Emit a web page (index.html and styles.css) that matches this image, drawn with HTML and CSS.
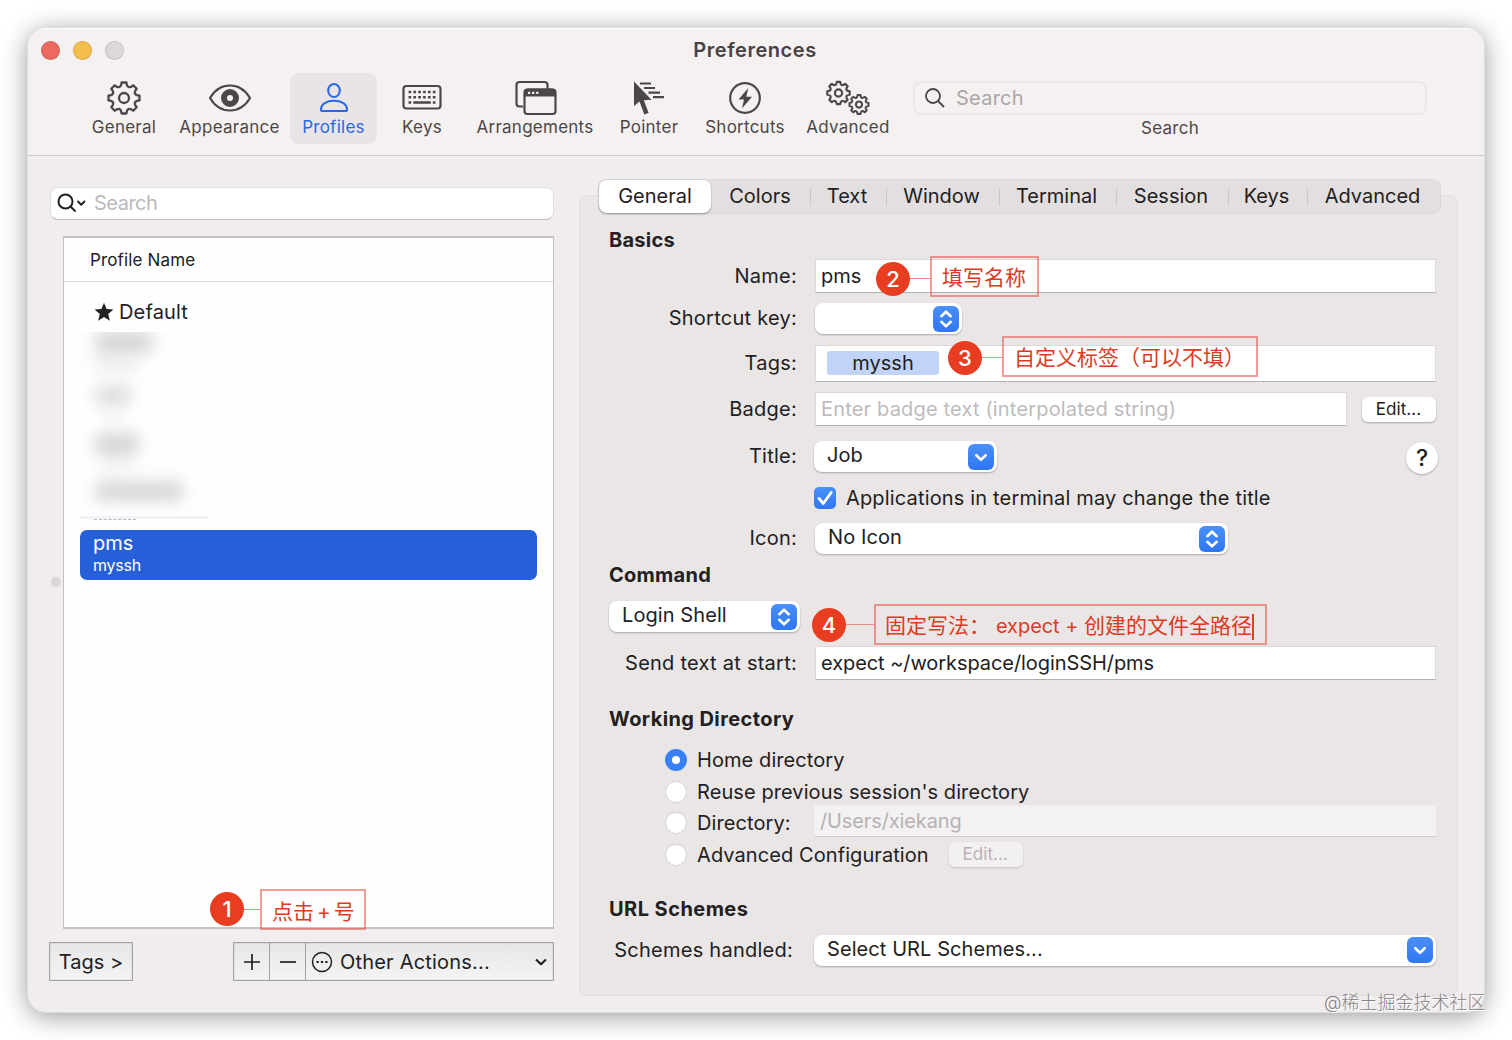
FILE: index.html
```html
<!DOCTYPE html>
<html lang="en">
<head>
    <meta charset="utf-8">
    <title>Preferences</title>
    <link rel="stylesheet" href="styles.css">
</head>
<body>
    <!-- Shared icons -->
    <svg class="defs" width="0" height="0">
        <symbol id="gear" viewBox="-18 -18 36 36">
            <path d="M-2.4-15.5L2.4-15.5C2.9-10.4 5.3-9.4 9.3-12.7L12.7-9.3C9.4-5.3 10.4-2.9 15.5-2.4L15.5 2.4C10.4 2.9 9.4 5.3 12.7 9.3L9.3 12.7C5.3 9.4 2.9 10.4 2.4 15.5L-2.4 15.5C-2.9 10.4-5.3 9.4-9.3 12.7L-12.7 9.3C-9.4 5.3-10.4 2.9-15.5 2.4L-15.5-2.4C-10.4-2.9-9.4-5.3-12.7-9.3L-9.3-12.7C-5.3-9.4-2.9-10.4-2.4-15.5Z"/>
            <circle r="5"/>
        </symbol>
        <symbol id="updown" viewBox="0 0 26 26">
            <path d="M8.3 10.2L13 5.7l4.7 4.5M8.3 15.8l4.7 4.5 4.7-4.5"/>
        </symbol>
        <symbol id="down" viewBox="0 0 26 26">
            <path d="M8.3 11.2l4.7 4.6 4.7-4.6"/>
        </symbol>
    </svg>

    <div class="window">
        <div class="titlebar">
            <div class="lights">
                <span class="light red"></span>
                <span class="light yellow"></span>
                <span class="light gray"></span>
            </div>
            <div class="title">Preferences</div>
        </div>

        <div class="toolbar">
            <div class="tool">
                <svg width="36" height="36" stroke-width="2.3"><use href="#gear"/></svg>
                <span>General</span>
            </div>
            <div class="tool">
                <svg width="44" height="36" viewBox="0 0 44 36" stroke-width="2.2">
                    <path d="M2 18C7 9.500 14 5.500 22 5.500s15 4 20 12.500C37 26.500 30 30.500 22 30.500S7 26.500 2 18Z"/>
                    <circle cx="22" cy="18" r="6" stroke-width="6"/>
                </svg>
                <span>Appearance</span>
            </div>
            <div class="tool active">
                <svg width="36" height="36" viewBox="0 0 36 36" stroke-width="2.1">
                    <ellipse cx="18" cy="10.500" rx="5.800" ry="6.500"/>
                    <path d="M5 29.500C5 24 10.500 20.800 18 20.800S31 24 31 29.500Q31 31 29.500 31H6.500Q5 31 5 29.500Z"/>
                </svg>
                <span>Profiles</span>
            </div>
            <div class="tool">
                <svg width="40" height="36" viewBox="0 0 40 36" stroke-width="2.2">
                    <rect x="1.500" y="6" width="37" height="22.500" rx="3"/>
                    <path d="M6.500 12h27M6.500 17.200h27" stroke-width="2.600" stroke-dasharray="2.700 2.160"/>
                    <path d="M6.500 22.500h2.700M30.800 22.500h2.700M11.300 22.500h17.500" stroke-width="2.600"/>
                </svg>
                <span>Keys</span>
            </div>
            <div class="tool">
                <svg class="shift" width="42" height="36" viewBox="0 0 42 36" stroke-width="2.2">
                    <path d="M8 26.500H4.500Q1.500 26.500 1.500 23.500V5Q1.500 2 4.500 2H29.500Q32.500 2 32.500 5V9"/>
                    <rect x="9.500" y="9.500" width="31" height="24.500" rx="3"/>
                    <path d="M10 15.500V12.500Q10 9.500 13 9.500H37Q40 9.500 40 12.500V15.500Z" class="solid"/>
                    <path d="M13 12.800h12" stroke="#f6f1f1" stroke-dasharray="2.200 1.900"/>
                </svg>
                <span>Arrangements</span>
            </div>
            <div class="tool">
                <svg width="34" height="36" viewBox="0 0 34 36" stroke-width="2.2">
                    <path d="M2 1.500V26L7.500 21.500 12.300 34.500 16.700 33 11.800 20.300 19.500 19.800Z" class="solid" stroke="none"/>
                    <path d="M8 3.500H19M12 8H23M16.500 12.700H28M21 17.200H32"/>
                </svg>
                <span>Pointer</span>
            </div>
            <div class="tool">
                <svg width="36" height="36" viewBox="0 0 36 36" stroke-width="2.2">
                    <circle cx="18" cy="18" r="14.800"/>
                    <path d="M21.300 8L11.500 19.500H17L15 28.500 25 16.700H19.300Z" class="solid" stroke="none"/>
                </svg>
                <span>Shortcuts</span>
            </div>
            <div class="tool">
                <svg width="44" height="36">
                    <use href="#gear" x="-.5" y="0" width="26" height="26" stroke-width="3"/>
                    <use href="#gear" x="22" y="13.500" width="22" height="22" stroke-width="3.4"/>
                </svg>
                <span>Advanced</span>
            </div>
            <div class="tool-search">
                <div class="top-search">
                    <svg width="22" height="22" viewBox="0 0 22 22" stroke-width="1.800"><circle cx="9" cy="9" r="7"/><path d="M14 14l6 6"/></svg>
                    <span>Search</span>
                </div>
                <span>Search</span>
            </div>
        </div>

        <div class="content">
            <div class="sidebar">
                <div class="side-search">
                    <svg width="30" height="22" viewBox="0 0 30 22" stroke-width="2"><circle cx="8.500" cy="9.500" r="7"/><path d="M13.500 14.500l5 5"/><path d="M20.500 9l3.700 3.700L28 9"/></svg>
                    <span>Search</span>
                </div>
                <div class="list">
                    <div class="list-head">Profile Name</div>
                    <div class="item">
                        <svg width="20" height="20" viewBox="0 0 20 20"><path d="M10 .8l2.600 6.300 6.800.5-5.200 4.400 1.700 6.700L10 15l-5.900 3.700 1.700-6.700L.6 7.600l6.800-.5z"/></svg>
                        <span>Default</span>
                    </div>
                    <div class="hidden-items">
                        <div class="smudge s1"></div>
                        <div class="smudge s2"></div>
                        <div class="smudge s3"></div>
                        <div class="smudge s4"></div>
                    </div>
                    <div class="remnant"></div>
                    <div class="item-selected">
                        <div class="item-name">pms</div>
                        <div class="item-tag">myssh</div>
                    </div>
                </div>
                <div class="side-buttons">
                    <div class="btn-square">Tags &gt;</div>
                    <div class="btn-group">
                        <div class="btn-add"><svg width="18" height="18" viewBox="0 0 18 18"><path d="M1 9h16M9 1v16"/></svg></div>
                        <div class="btn-add"><svg width="18" height="18" viewBox="0 0 18 18"><path d="M1 9h16"/></svg></div>
                        <div class="btn-actions">
                            <svg width="22" height="22" viewBox="0 0 22 22"><circle cx="11" cy="11" r="9.500"/><path d="M5.500 11h11" stroke-width="2.200" stroke-dasharray="2.200"/></svg>
                            <span>Other Actions...</span>
                            <svg class="caret" width="12" height="8" viewBox="0 0 12 8"><path d="M1 1.500l5 4.700 5-4.700"/></svg>
                        </div>
                    </div>
                </div>
            </div>

            <div class="panel">
                <div class="tabs">
                    <div class="tab selected">General</div>
                    <div class="tab">Colors</div>
                    <div class="tab line">Text</div>
                    <div class="tab line">Window</div>
                    <div class="tab line">Terminal</div>
                    <div class="tab line">Session</div>
                    <div class="tab line">Keys</div>
                    <div class="tab line">Advanced</div>
                </div>

                <h2 class="h-basics">Basics</h2>
                <div class="row r-name">
                    <label>Name:</label>
                    <div class="field">pms</div>
                </div>
                <div class="row r-shortcut">
                    <label>Shortcut key:</label>
                    <div class="select w-shortcut"><span></span><svg class="knob"><use href="#updown"/></svg></div>
                </div>
                <div class="row r-tags">
                    <label>Tags:</label>
                    <div class="field"><span class="token">myssh</span></div>
                </div>
                <div class="row r-badge">
                    <label>Badge:</label>
                    <div class="field placeholder">Enter badge text (interpolated string)</div>
                    <div class="btn">Edit...</div>
                </div>
                <div class="row r-title">
                    <label>Title:</label>
                    <div class="select w-title"><span>Job</span><svg class="knob"><use href="#down"/></svg></div>
                    <div class="help">?</div>
                </div>
                <div class="row r-check">
                    <div class="check"><svg width="22" height="22" viewBox="0 0 22 22"><path d="M5 11.500l4.300 5L17.200 5.500"/></svg></div>
                    <span>Applications in terminal may change the title</span>
                </div>
                <div class="row r-icon">
                    <label>Icon:</label>
                    <div class="select w-icon"><span>No Icon</span><svg class="knob"><use href="#updown"/></svg></div>
                </div>

                <h2 class="h-command">Command</h2>
                <div class="row r-shell">
                    <div class="select w-shell"><span>Login Shell</span><svg class="knob"><use href="#updown"/></svg></div>
                </div>
                <div class="row r-send">
                    <label>Send text at start:</label>
                    <div class="field">expect ~/workspace/loginSSH/pms</div>
                </div>

                <h2 class="h-working">Working Directory</h2>
                <div class="radios">
                    <div class="radio-row"><span class="radio on"></span><span>Home directory</span></div>
                    <div class="radio-row"><span class="radio"></span><span>Reuse previous session's directory</span></div>
                    <div class="radio-row"><span class="radio"></span><span class="dir-label">Directory:</span><div class="field disabled">/Users/xiekang</div></div>
                    <div class="radio-row"><span class="radio"></span><span>Advanced Configuration</span><div class="btn off">Edit...</div></div>
                </div>

                <h2 class="h-url">URL Schemes</h2>
                <div class="row r-url">
                    <label>Schemes handled:</label>
                    <div class="select w-url"><span>Select URL Schemes...</span><svg class="knob"><use href="#down"/></svg></div>
                </div>
            </div>
        </div>
        <span class="splitter-dot"></span>
    </div>

    <!-- Step notes over the window -->
    <div class="note n1"><span class="num">1</span><span class="wire"></span><span class="box">点击 + 号</span></div>
    <div class="note n2"><span class="num">2</span><span class="wire"></span><span class="box">填写名称</span></div>
    <div class="note n3"><span class="num">3</span><span class="wire"></span><span class="box">自定义标签（可以不填）</span></div>
    <div class="note n4"><span class="num">4</span><span class="wire"></span><span class="box">固定写法： <span class="latin">expect + </span>创建的文件全路径<i class="cursor"></i></span></div>
    <div class="watermark">@稀土掘金技术社区</div>
</body>
</html>
```
FILE: styles.css
```css
* {
    box-sizing: border-box;
}
body {
    margin: 0;
    padding: 28px;
    width: 1512px;
    height: 1040px;
    overflow: hidden;
    background: #fff;
    position: relative;
    font-family: Inter, "Noto Sans CJK SC", sans-serif;
    font-size: 20px;
    color: #222021;
    white-space: nowrap;
}
svg {
    fill: none;
    stroke: currentColor;
    stroke-linejoin: round;
    flex: none;
}
.defs {
    position: absolute;
}
.solid {
    fill: currentColor;
}
.window {
    position: relative;
    width: 1456px;
    height: 984px;
    border-radius: 18px;
    background: #f1edee;
    box-shadow: 0 0 0 1px #dddbdb, 0 4px 26px rgba(0, 0, 0, 0.42);
    overflow: hidden;
}

/* title bar */
.titlebar {
    height: 45px;
    display: grid;
    grid-template-columns: 200px 1fr 200px;
    align-items: center;
    background: #f6f1f1;
    border-top: 1px solid #fff;
    padding-bottom: 1px;
}
.lights {
    display: flex;
    gap: 13px;
    padding-left: 13px;
}
.light {
    width: 19px;
    height: 19px;
    border-radius: 50%;
    border: 1px solid rgba(0, 0, 0, 0.1);
}
.red {
    background: #ec695f;
}
.yellow {
    background: #f3bf4c;
}
.gray {
    background: #dcd7d8;
}
.title {
    text-align: center;
    font-weight: 600;
    font-size: 20px;
    letter-spacing: 0.55px;
    color: #474344;
    padding: 0 2px 1px 0;
}

/* toolbar */
.toolbar {
    height: 83px;
    display: grid;
    grid-template-columns: 90px 121px 87px 90px 136px 92px 100px 106px 514px;
    align-items: start;
    padding-left: 51px;
    background: #f6f1f1;
    border-bottom: 1px solid #d0cccd;
    color: #4b4748;
    font-size: 17px;
    letter-spacing: 0.25px;
}
.tool {
    height: 71px;
    padding-top: 7px;
    display: flex;
    flex-direction: column;
    align-items: center;
    line-height: 23px;
}
.shift {
    margin-left: 1px;
}
.active {
    background: #e9e4e5;
    border-radius: 9px;
    color: #2b68e8;
}
.tool-search {
    margin-left: 12px;
    width: 514px;
    padding-top: 8px;
    display: flex;
    flex-direction: column;
    align-items: center;
    line-height: 22px;
}
.top-search {
    width: 514px;
    height: 34px;
    margin-bottom: 2px;
    border: 2px solid #ece7e7;
    border-radius: 8px;
    display: flex;
    align-items: center;
    gap: 10px;
    padding-left: 9px;
    font-size: 20px;
}
.top-search span {
    color: #aaa6a7;
}

/* left side */
.content {
    display: flex;
    height: 856px;
}
.sidebar {
    width: 526px;
    padding: 31px 0 0 21px;
}
.side-search {
    width: 504px;
    height: 33px;
    margin-left: 1px;
    background: #fff;
    border-radius: 8px;
    border: 1px solid #e2dedf;
    border-bottom-color: #bfbbbc;
    display: flex;
    align-items: center;
    gap: 7px;
    padding: 0 0 1px 6px;
}
.side-search span {
    color: #bcb9ba;
    padding-bottom: 1px;
    letter-spacing: -0.5px;
}
.list {
    margin: 16px 0 0 14px;
    width: 491px;
    height: 693px;
    background: #fefefe;
    border: 2px solid #c3c1c1;
    border-left-width: 1px;
    border-right-width: 1px;
}
.list-head {
    height: 44px;
    padding-left: 26px;
    line-height: 44px;
    font-size: 17px;
    letter-spacing: 0.15px;
    border-bottom: 1px solid #dcdada;
}
.item {
    height: 50px;
    padding: 9px 0 0 30px;
    display: flex;
    align-items: center;
    gap: 5px;
    letter-spacing: 0.15px;
}
.item svg {
    fill: #222021;
    stroke: none;
}
.hidden-items {
    height: 184px;
    padding: 0 0 0 23px;
    overflow: hidden;
}
.smudge {
    background: #d2d2d2;
    filter: blur(8px);
    margin-left: 9px;
}
.s1 {
    width: 56px;
    height: 20px;
    box-shadow: -8px 22px 6px -6px #e0e0e0;
}
.s2 {
    width: 34px;
    height: 18px;
    margin-top: 34px;
    background: #dadada;
    box-shadow: 0 20px 6px -6px #e8e8e8;
}
.s3 {
    width: 42px;
    height: 20px;
    margin-top: 30px;
    box-shadow: 0 20px 6px -6px #e8e8e8;
}
.s4 {
    width: 86px;
    height: 18px;
    margin-top: 28px;
}
.remnant {
    width: 128px;
    height: 15px;
    margin-left: 16px;
    border-top: 3px solid #f1f3f9;
}
.remnant::before {
    content: "";
    display: block;
    width: 42px;
    margin-left: 14px;
    border-top: 1px dashed #b5b7bc;
}
.item-selected {
    width: 457px;
    height: 50px;
    margin: -1px 0 0 16px;
    padding: 1px 0 0 13px;
    background: #2660d8;
    border-radius: 7px;
    color: #fff;
}
.item-name {
    line-height: 24px;
}
.item-tag {
    font-size: 16px;
    line-height: 20px;
    letter-spacing: -0.2px;
}
.side-buttons {
    display: flex;
    justify-content: space-between;
    width: 505px;
    margin-top: 13px;
}
.btn-square, .btn-group {
    height: 39px;
    border: 1px solid #a3a1a1;
    box-shadow: inset 0 0 0 1px rgba(0, 0, 0, 0.06);
    background: linear-gradient(#e6e6e6, #f4f4f4);
}
.btn-square {
    width: 84px;
    text-align: center;
    line-height: 39px;
}
.btn-group {
    width: 321px;
    display: flex;
    align-items: stretch;
}
.btn-add {
    width: 36px;
    border-right: 1px solid #a3a1a1;
    display: flex;
    align-items: center;
    justify-content: center;
    stroke-width: 1.7;
}
.btn-actions {
    flex: 1;
    display: flex;
    align-items: center;
    gap: 7px;
    padding: 0 6px 0 5px;
    stroke-width: 1.5;
    letter-spacing: 0.2px;
}
.caret {
    margin-left: auto;
    stroke-width: 2.2;
}
.splitter-dot {
    position: absolute;
    left: 23px;
    top: 549px;
    width: 10px;
    height: 10px;
    border-radius: 50%;
    background: #dad6d7;
}

/* settings panel */
.panel {
    width: 879px;
    height: 801px;
    margin: 39px 0 0 25px;
    padding: 0 21px 0 29px;
    background: #eae6e6;
    border: 1px solid #e1dddd;
    border-radius: 8px;
}
.tabs {
    display: grid;
    grid-template-columns: 112px 99px 76px 113px 117px 112px 79px 133px;
    width: 843px;
    height: 35px;
    margin: -17px 0 0 -11px;
    background: #e3dfe0;
    border: 1px solid #dcd8d9;
    border-radius: 8px;
    position: relative;
}
.tab {
    height: 33px;
    line-height: 32px;
    text-align: center;
    padding-right: 1px;
}
.tab.line {
    background: linear-gradient(#ccc8c9, #ccc8c9) no-repeat 0 8px / 1px 18px;
    padding-right: 2px;
}
.tab.selected {
    background: #fff;
    border-radius: 8px;
    box-shadow: 0 1px 2px rgba(0, 0, 0, 0.35);
    padding: 0;
}
h2 {
    margin: 0;
    height: 26px;
    font-size: 20px;
    line-height: 26px;
    font-weight: 700;
    letter-spacing: 0.25px;
}
.h-basics {
    margin-top: 13px;
}
.h-command {
    margin-top: 7px;
}
.h-working {
    margin-top: 26px;
    letter-spacing: 0.4px;
}
.h-url {
    margin-top: 25px;
    letter-spacing: 0.45px;
}
.row {
    display: flex;
    align-items: center;
}
.row label {
    width: 188px;
    margin-right: 18px;
    padding-bottom: 1px;
    text-align: right;
    letter-spacing: 0.25px;
    flex: none;
}
.field {
    flex: 1;
    align-self: stretch;
    display: flex;
    align-items: center;
    padding: 0 5px;
    background: #fff;
    border: 1px solid #dcd9d9;
    border-bottom: 1px solid #b3b0b0;
}
.placeholder {
    color: #bdbbbc;
    letter-spacing: 0.17px;
}
.r-name {
    height: 34px;
    margin-top: 6px;
}
.r-shortcut {
    height: 33px;
    margin-top: 9px;
}
.r-tags {
    height: 37px;
    margin-top: 10px;
}
.r-badge {
    height: 34px;
    margin-top: 10px;
}
.r-badge label {
    padding: 0;
}
.r-title {
    height: 33px;
    margin-top: 14px;
}
.r-check {
    height: 26px;
    margin-top: 12px;
    padding-left: 205px;
    gap: 10px;
    letter-spacing: 0.16px;
}
.r-icon {
    height: 33px;
    margin-top: 11px;
}
.r-shell {
    height: 33px;
    margin-top: 12px;
}
.r-send {
    height: 34px;
    margin-top: 13px;
}
.r-send .field {
    letter-spacing: -0.07px;
}
.r-url {
    height: 33px;
    margin-top: 12px;
}
.r-url label {
    width: 184px;
    margin-right: 21px;
}
.token {
    width: 112px;
    height: 24px;
    margin: 0 0 2px 6px;
    background: #c1d4f8;
    border-radius: 3px;
    text-align: center;
    line-height: 24px;
}
.select {
    height: 31px;
    background: #fff;
    border-radius: 8px;
    box-shadow: 0 1px 2px rgba(0, 0, 0, 0.28);
    display: flex;
    align-items: center;
    justify-content: space-between;
    padding: 0 3px 0 13px;
}
.select span {
    line-height: 29px;
    padding-bottom: 2px;
    letter-spacing: 0.08px;
}
.knob {
    width: 26px;
    height: 26px;
    border-radius: 6px;
    background: linear-gradient(#4a90f8, #2f76f2);
    stroke: #fff;
    stroke-width: 2.6;
    stroke-linecap: round;
}
.w-shortcut {
    width: 147px;
}
.w-title {
    width: 183px;
    margin-left: -1px;
}
.w-icon {
    width: 413px;
}
.w-shell {
    width: 191px;
}
.w-url {
    width: 622px;
}
.btn {
    width: 74px;
    height: 25px;
    margin-left: 15px;
    background: #fff;
    border-radius: 6px;
    box-shadow: 0 1px 2px rgba(0, 0, 0, 0.28);
    font-size: 17px;
    line-height: 25px;
    text-align: center;
    padding-right: 1px;
    letter-spacing: 0.1px;
}
.off {
    margin-left: 20px;
    background: #f3f0f0;
    color: #b7b3b4;
    box-shadow: 0 1px 2px rgba(0, 0, 0, 0.15);
}
.help {
    width: 32px;
    height: 32px;
    margin: 3px -2px 0 auto;
    border-radius: 50%;
    background: #fff;
    box-shadow: 0 1px 2px rgba(0, 0, 0, 0.28);
    text-align: center;
    line-height: 32px;
    font-size: 23px;
    font-weight: 500;
}
.check {
    width: 22px;
    height: 22px;
    border-radius: 5px;
    background: linear-gradient(#4a90f8, #2f76f2);
    stroke-width: 2.8;
    stroke-linecap: round;
    color: #fff;
}
.radios {
    margin-top: 12px;
    padding-left: 56px;
    letter-spacing: 0.08px;
}
.radio-row {
    height: 31.7px;
    display: flex;
    align-items: center;
}
.radio {
    width: 22px;
    height: 22px;
    margin-right: 10px;
    border-radius: 50%;
    background: #fff;
    border: 1px solid #d6d2d3;
}
.radio.on {
    border: 7px solid #397ff5;
}
.dir-label {
    width: 117px;
}
.disabled {
    margin-top: -2px;
    margin-bottom: 2px;
    background: #f3f1f1;
    border-color: #f0eded;
    border-bottom: 1px solid #cfcbcc;
    color: #b5b2b3;
    letter-spacing: -0.12px;
}

/* notes */
.note {
    position: absolute;
    display: flex;
    align-items: center;
    color: #dd3a22;
    font-size: 20px;
}
.num {
    width: 34px;
    height: 34px;
    border-radius: 50%;
    background: #e93d21;
    color: #fff;
    font-size: 22px;
    font-weight: 500;
    line-height: 34px;
    text-align: center;
}
.wire {
    height: 1px;
    background: #ee8a80;
}
.box {
    height: 41px;
    border: 2px solid rgba(232, 90, 80, 0.6);
    font-size: 21px;
    line-height: 39px;
    padding-left: 10px;
}
.n1 {
    left: 210px;
    top: 889px;
}
.n1 .num {
    margin-top: -2px;
}
.n1 .wire {
    width: 16px;
}
.n1 .box {
    width: 106px;
    word-spacing: -3px;
    line-height: 41px;
}
.n2 {
    left: 876px;
    top: 256px;
}
.n2 .num {
    margin-top: 5px;
}
.n2 .wire {
    width: 20px;
    margin-top: 4px;
}
.n2 .box {
    width: 109px;
    line-height: 40px;
}
.n3 {
    left: 948px;
    top: 336px;
}
.n3 .num {
    margin-top: 3px;
}
.n3 .wire {
    width: 20px;
    margin-top: 2px;
}
.n3 .box {
    width: 256px;
}
.n4 {
    left: 812px;
    top: 604px;
}
.n4 .wire {
    width: 28px;
}
.n4 .box {
    width: 393px;
    padding-left: 9px;
    line-height: 40px;
}
.latin {
    font-size: 20px;
    letter-spacing: -0.05px;
}
.cursor {
    display: inline-block;
    width: 2px;
    height: 26px;
    background: #e93d21;
    vertical-align: middle;
}
.watermark {
    position: absolute;
    left: 1324px;
    top: 991px;
    font-size: 18px;
    line-height: 24px;
    font-weight: 300;
    color: #858283;
    text-shadow: 1px 1px 0 #fff;
}
```
